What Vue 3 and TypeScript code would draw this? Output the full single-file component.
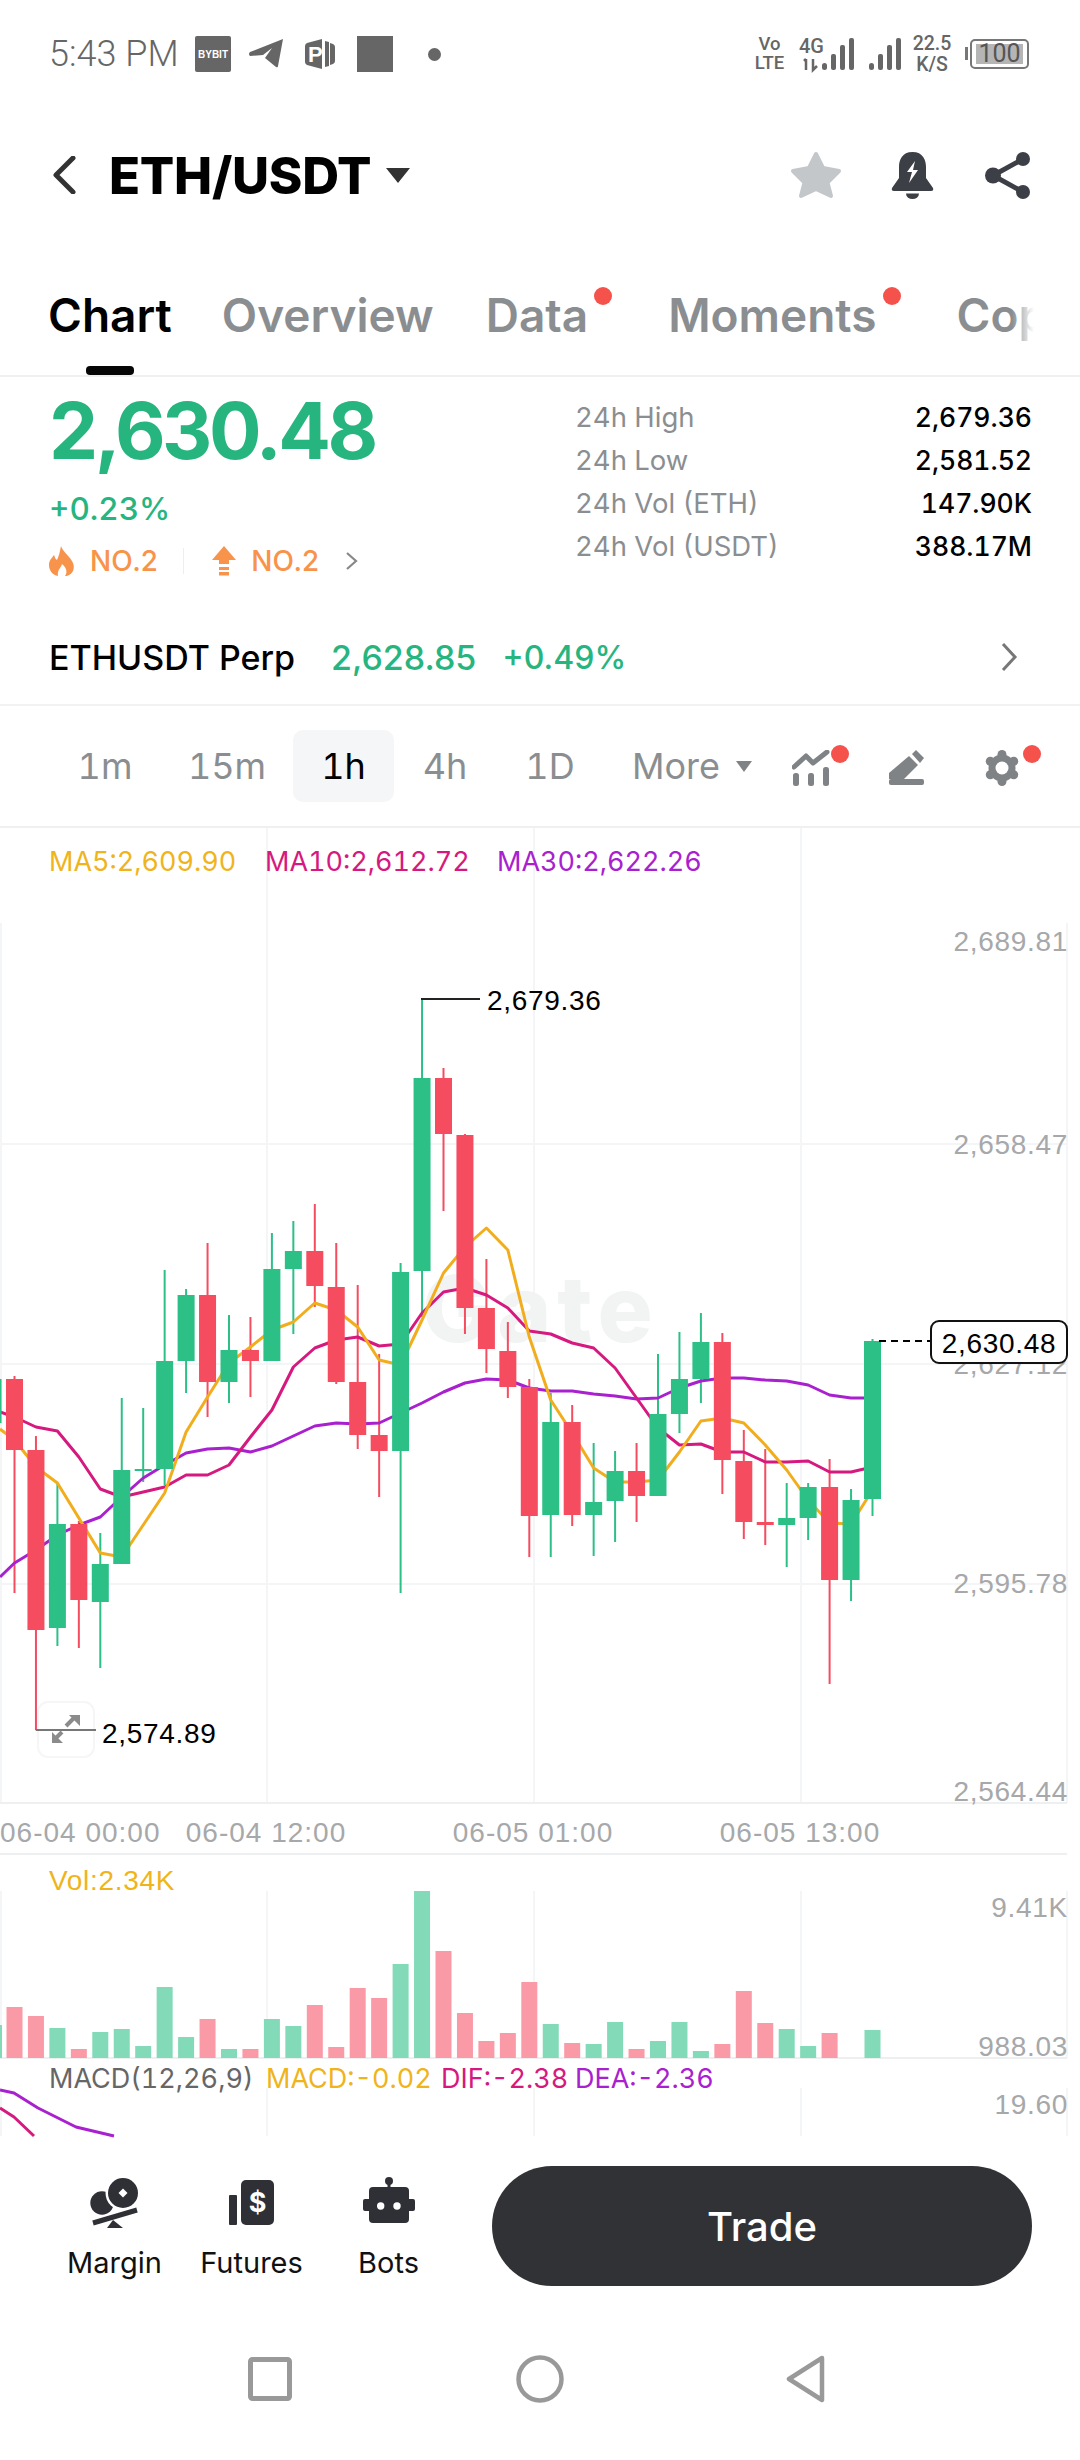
<template>
  <div class="page">
    <div class="status">
      <span class="time">5:43 PM</span>
      <span class="bybit">BYBIT</span>
      <svg class="st-plane" viewBox="0 0 36 32"><path d="M35 1 2 14q-2 2 0 4l13-1 9-7-7 10 11 9q2 1 2-1z" fill="#666"/></svg>
      <svg class="st-p" viewBox="0 0 30 30">
        <path d="M2 4 17 0v30L2 26q-2-1-2-3V7q0-2 2-3z" fill="#666"/>
        <path d="M20 2l4 1v24l-4 1zM25 4l3 1q2 1 2 3v14q0 2-2 3l-3 1z" fill="#666"/>
        <text x="3" y="23" class="st-p-text">P</text>
      </svg>
      <span class="st-square"></span>
      <span class="st-dot"></span>
      <div class="st-right">
        <span class="volte">Vo<br />LTE</span>
        <svg class="st-signal" viewBox="0 0 56 34">
          <text x="0" y="16" class="sig-text">4G</text>
          <path d="M7 22v11M5 24l2-2M14 22v11l4-4" stroke="#666" stroke-width="2.500" fill="none"/>
          <rect x="23" y="26" width="5" height="7" rx="2.500" fill="#666"/>
          <rect x="32" y="17" width="5" height="16" rx="2" fill="#666"/>
          <rect x="41" y="8" width="5" height="25" rx="2" fill="#666"/>
          <rect x="50" y="1" width="5" height="32" rx="2" fill="#666"/>
        </svg>
        <svg class="st-signal2" viewBox="0 0 33 34">
          <rect x="0" y="26" width="5" height="7" rx="2.500" fill="#666"/>
          <rect x="9" y="17" width="5" height="16" rx="2" fill="#666"/>
          <rect x="18" y="8" width="5" height="25" rx="2" fill="#666"/>
          <rect x="27" y="1" width="5" height="32" rx="2" fill="#666"/>
        </svg>
        <span class="speed">22.5<br />K/S</span>
        <div class="battery"><span>100</span></div>
      </div>
    </div>

    <div class="header">
      <svg class="back" viewBox="0 0 24 38"><path d="M21 2 4 19l17 17" fill="none" stroke="#333" stroke-width="5" stroke-linecap="round" stroke-linejoin="round"/></svg>
      <h1 class="title">ETH/USDT</h1>
      <span class="caret-big"></span>
      <div class="head-icons">
        <svg class="ic-star" viewBox="0 0 52 48"><path d="M26 3l7 14 16 3-11.500 11.500L41 45l-15-7-15 7 3.500-13.500L3 20l16-3z" fill="#c3c7ca" stroke="#c3c7ca" stroke-width="4" stroke-linejoin="round"/></svg>
        <svg class="ic-bell" viewBox="0 0 45 47">
          <path d="M22.500 0C12 0 9 8 9 15v11L2 36q-1 3 2 3h37q3 0 2-3l-7-10V15C36 8 33 0 22.500 0z" fill="#3c3f46"/>
          <path d="M16 41.500h13a6.500 5.500 0 0 1-13 0z" fill="#3c3f46"/>
          <path d="M25 9l-8 11h5l-3 11 9-13h-5z" fill="#fff"/>
        </svg>
        <svg class="ic-share" viewBox="0 0 46 47">
          <path d="M38 7 8 23.500 38 40" fill="none" stroke="#3c3f46" stroke-width="5"/>
          <circle cx="38" cy="7" r="7" fill="#3c3f46"/>
          <circle cx="8" cy="23.500" r="8" fill="#3c3f46"/>
          <circle cx="38" cy="40" r="7" fill="#3c3f46"/>
        </svg>
      </div>
    </div>

    <div class="tabs">
      <span class="tab active">Chart</span>
      <span class="tab">Overview</span>
      <span class="tab dotted">Data<i class="dot"></i></span>
      <span class="tab dotted">Moments<i class="dot"></i></span>
      <span class="tab">Copy</span>
      <span class="tabs-fade"></span>
    </div>

    <div class="stats">
      <div class="stats-left">
        <div class="price">2,630.48</div>
        <div class="change">+0.23%</div>
        <div class="rank">
          <svg class="ic-flame" viewBox="0 0 26 30"><path d="M12 0c2 6 9 10 12 17 3 8-3 13-8 13 3-4 1-9-3-12-1 4-5 6-4 12-5-1-9-5-9-11 0-5 3-7 5-10 1 2 1 4 3 5 2-4 3-9 4-14z" fill="#f7934a"/></svg>
          <span>NO.2</span>
          <i class="rank-sep"></i>
          <svg class="ic-up" viewBox="0 0 26 30"><path d="M13 0l12 14h-7v4H8v-4H1z" fill="#f7934a"/><path d="M8 21h10v3H8zM8 26h10v3.500H8z" fill="#f7934a"/></svg>
          <span>NO.2</span>
          <svg class="rank-more" viewBox="0 0 13 18"><path d="M2 1l9 8-9 8" fill="none" stroke="#888" stroke-width="2.200"/></svg>
        </div>
      </div>
      <div class="stats-right">
        <div v-for="row in stats" :key="row.label" class="stat-row">
          <span class="stat-label">{{ row.label }}</span>
          <span class="stat-value">{{ row.value }}</span>
        </div>
      </div>
    </div>

    <div class="perp">
      <span class="perp-name">ETHUSDT Perp</span>
      <span class="perp-price">2,628.85</span>
      <span class="perp-change">+0.49%</span>
      <svg class="perp-more" viewBox="0 0 18 30"><path d="M3 2l12 13L3 28" fill="none" stroke="#777" stroke-width="3"/></svg>
    </div>

    <div class="frames">
      <span class="frame f1m">1m</span>
      <span class="frame f15m">15m</span>
      <span class="frame f1h">1h</span>
      <span class="frame f4h">4h</span>
      <span class="frame f1d">1D</span>
      <span class="frame fmore">More</span>
      <span class="caret-small"></span>
      <div class="tools">
        <div class="tool tool-wide">
          <svg viewBox="0 0 38 36">
            <path d="M2 17 14 6l7 7L35 2" fill="none" stroke="#808386" stroke-width="5" stroke-linecap="round" stroke-linejoin="round"/>
            <rect x="1" y="23" width="6" height="13" rx="2.500" fill="#808386"/>
            <rect x="16" y="23" width="6" height="13" rx="2.500" fill="#808386"/>
            <rect x="31" y="17" width="6" height="19" rx="2.500" fill="#808386"/>
          </svg>
          <i class="dot tool-dot"></i>
        </div>
        <div class="tool">
          <svg viewBox="0 0 36 36">
            <path d="M0 23 20 6l9 9-14 14H0z" fill="#808386"/>
            <path d="M23 4l4-4 8 8-4 5z" fill="#808386"/>
            <rect x="0" y="29" width="35" height="6" rx="2" fill="#808386"/>
          </svg>
        </div>
        <div class="tool">
          <svg viewBox="0 0 36 36">
            <circle cx="18" cy="18" r="13.500" fill="#808386"/>
            <circle v-for="p in gearLobes" :key="p[0] + '-' + p[1]" :cx="p[0]" :cy="p[1]" r="4.500" fill="#808386"/>
            <circle cx="18" cy="18" r="6.500" fill="#fff"/>
          </svg>
          <i class="dot tool-dot gear-dot"></i>
        </div>
      </div>
    </div>

    <svg class="chart" viewBox="0 828 1080 1310">
      <g class="grid">
        <path v-for="x in gridX" :key="x" :d="`M${x} 923V1803M${x} 1891V2058M${x} 2088V2136`" />
        <path d="M0 1144H1067M0 1364H1067M0 1584H1067" />
        <path d="M0 1803H1067M0 1854H1067M0 2058H1067" class="grid-strong" />
        <path d="M267 828V923M534 828V923M801 828V923" />
      </g>

      <text x="49" y="871" class="legend" fill="#efb41c">MA5:2,609.90</text>
      <text x="265" y="871" class="legend" fill="#d6197e">MA10:2,612.72</text>
      <text x="497" y="871" class="legend" fill="#a921cf">MA30:2,622.26</text>

      <g class="watermark">
        <text x="422" y="1342">Gate</text>
      </g>

      <rect x="38" y="1702" width="56" height="55" rx="10" fill="#fff" stroke="#f6f6f6" stroke-width="2" />

      <g v-for="c in candles" :key="c.x">
        <path :d="`M${c.x} ${c.h}V${c.l}`" :stroke="c.color" stroke-width="2" />
      </g>

      <polyline :points="ma30" class="ma" stroke="#a921cf" />
      <polyline :points="ma10" class="ma" stroke="#d6197e" />
      <polyline :points="ma5" class="ma" stroke="#f2ad1d" />

      <!-- bodies sit over the moving averages in the reference -->
      <rect v-for="c in candles" :key="'b' + c.x" :x="c.x - 8.500" :y="c.t" width="17" :height="c.b - c.t" :fill="c.color" />

      <path d="M421 999H480" stroke="#222" stroke-width="2" />
      <text x="487" y="1010" class="tick dark">2,679.36</text>

      <path d="M35.800 1730H96" stroke="#777" stroke-width="2" />
      <path d="M66 1726l8-8M62 1732l-6 6" stroke="#8b8b8b" stroke-width="4" />
      <path d="M69 1715h11v11zM63 1743H52v-11z" fill="#8b8b8b" />
      <text x="102" y="1743" class="tick dark">2,574.89</text>

      <text x="1068" y="951" class="tick axis">2,689.81</text>
      <text x="1068" y="1154" class="tick axis">2,658.47</text>
      <text x="1068" y="1374" class="tick axis">2,627.12</text>
      <text x="1068" y="1593" class="tick axis">2,595.78</text>
      <text x="1068" y="1801" class="tick axis">2,564.44</text>

      <path d="M879 1341H930" stroke="#000" stroke-width="2" stroke-dasharray="7 5" />
      <rect x="931" y="1321" width="136" height="42" rx="8" fill="#fff" stroke="#111" stroke-width="2" />
      <text x="999" y="1353" class="tick dark mid">2,630.48</text>

      <text x="0" y="1842" class="tick date wide">06-04 00:00</text>
      <text x="266" y="1842" class="tick date wide mid">06-04 12:00</text>
      <text x="533" y="1842" class="tick date wide mid">06-05 01:00</text>
      <text x="800" y="1842" class="tick date wide mid">06-05 13:00</text>

      <text x="49" y="1890" class="tick" fill="#efb41c">Vol:2.34K</text>
      <rect x="-6" y="2025" width="8" height="33" :fill="VOL_GREEN" />
      <rect v-for="v in volumes" :key="'v' + v.x" :x="v.x - 8" :y="v.y" width="16" :height="2058 - v.y" :fill="v.color" />
      <text x="1068" y="1917" class="tick axis">9.41K</text>
      <text x="1068" y="2056" class="tick axis">988.03</text>

      <text x="49" y="2088" class="legend" fill="#666">MACD(12,26,9)</text>
      <text x="266" y="2088" class="legend" fill="#efb41c">MACD:-0.02</text>
      <text x="441" y="2088" class="legend" fill="#d6197e">DIF:-2.38</text>
      <text x="575" y="2088" class="legend" fill="#a921cf">DEA:-2.36</text>
      <text x="1068" y="2114" class="tick axis">19.60</text>
      <polyline points="0,2090 14,2093 38,2108 76,2127 114,2136" class="ma" stroke="#a921cf" />
      <polyline points="0,2108 14,2117 34,2136" class="ma" stroke="#d6197e" />
    </svg>

    <div class="actions">
      <div class="action">
        <div class="icon-box">
          <svg class="ic-margin" viewBox="0 0 50 54">
            <circle cx="12" cy="27" r="11.700" fill="#2e3036" />
            <circle cx="33" cy="17" r="17.500" fill="#fff" />
            <circle cx="33" cy="17" r="15" fill="#2e3036" />
            <path d="M33 12.500l4.500 4.500-4.500 4.500-4.500-4.500z" fill="#fff" />
            <path d="M3 47 47 34" stroke="#fff" stroke-width="9" />
            <path d="M3 47 47 34" stroke="#2e3036" stroke-width="5" />
            <path d="M23 44l10 8H17z" fill="#2e3036" />
          </svg>
        </div>
        <span>Margin</span>
      </div>
      <div class="action">
        <div class="icon-box">
          <svg class="ic-futures" viewBox="0 0 46 46">
            <rect x="0" y="15" width="8" height="30" rx="1" fill="#2e3036" />
            <rect x="12" y="0" width="33" height="45" rx="5" fill="#2e3036" />
            <text x="28.500" y="32" class="dollar">$</text>
          </svg>
        </div>
        <span>Futures</span>
      </div>
      <div class="action">
        <div class="icon-box">
          <svg class="ic-bots" viewBox="0 0 52 46">
            <circle cx="26" cy="4" r="4" fill="#2e3036" />
            <rect x="24.500" y="6" width="3" height="5" fill="#2e3036" />
            <rect x="6" y="10" width="40" height="36" rx="4" fill="#2e3036" />
            <rect x="0" y="22" width="52" height="12" rx="2" fill="#2e3036" />
            <circle cx="17.700" cy="29" r="3.700" fill="#fff" />
            <circle cx="34" cy="29" r="3.700" fill="#fff" />
          </svg>
        </div>
        <span>Bots</span>
      </div>
      <button class="trade">Trade</button>
    </div>

    <div class="nav">
      <svg class="nav-square" viewBox="0 0 44 44"><rect x="2.500" y="2.500" width="39" height="39" rx="2" fill="none" stroke="#999" stroke-width="5" /></svg>
      <svg class="nav-circle" viewBox="0 0 48 48"><circle cx="24" cy="24" r="21.500" fill="none" stroke="#999" stroke-width="4.500" /></svg>
      <svg class="nav-back" viewBox="0 0 40 48"><path d="M36 3 3 24l33 21z" fill="none" stroke="#999" stroke-width="4.500" stroke-linejoin="round" /></svg>
    </div>
  </div>
</template>

<script setup lang="ts">
const GREEN = '#2cc087'
const RED = '#f54c60'
const VOL_GREEN = '#82dab8'
const VOL_RED = '#fb9aa7'

const stats = [
  { label: '24h High', value: '2,679.36' },
  { label: '24h Low', value: '2,581.52' },
  { label: '24h Vol (ETH)', value: '147.90K' },
  { label: '24h Vol (USDT)', value: '388.17M' },
]

const gridX = [1, 267, 534, 801, 1067]

const gearLobes = [
  [18, 4.5],
  [29.7, 11.25],
  [29.7, 24.75],
  [18, 31.5],
  [6.3, 24.75],
  [6.3, 11.25],
]

const candleX = (i: number) => 14.5 + i * 21.45

// high, body top, body bottom, low, g/r — read off the picture in page pixels
const rawCandles: [number, number, number, number, string][] = [
  [1376, 1379, 1423, 1423, 'g'],
  [1376, 1379, 1450, 1593, 'r'],
  [1436, 1450, 1630, 1730, 'r'],
  [1483, 1524, 1628, 1646, 'g'],
  [1521, 1524, 1600, 1648, 'r'],
  [1533, 1564, 1602, 1668, 'g'],
  [1398, 1470, 1564, 1564, 'g'],
  [1408, 1469, 1471, 1482, 'g'],
  [1270, 1361, 1469, 1485, 'g'],
  [1289, 1295, 1361, 1393, 'g'],
  [1243, 1295, 1382, 1417, 'r'],
  [1315, 1350, 1382, 1403, 'g'],
  [1317, 1350, 1361, 1397, 'r'],
  [1233, 1269, 1361, 1361, 'g'],
  [1221, 1251, 1269, 1334, 'g'],
  [1204, 1251, 1286, 1307, 'r'],
  [1243, 1287, 1382, 1384, 'r'],
  [1285, 1382, 1435, 1449, 'r'],
  [1354, 1435, 1451, 1497, 'r'],
  [1263, 1272, 1451, 1593, 'g'],
  [998, 1078, 1271, 1317, 'g'],
  [1068, 1078, 1134, 1211, 'r'],
  [1134, 1135, 1308, 1334, 'r'],
  [1259, 1308, 1349, 1373, 'r'],
  [1322, 1351, 1387, 1398, 'r'],
  [1379, 1387, 1516, 1557, 'r'],
  [1393, 1422, 1515, 1557, 'g'],
  [1405, 1422, 1515, 1526, 'r'],
  [1443, 1502, 1515, 1556, 'g'],
  [1451, 1471, 1501, 1542, 'g'],
  [1443, 1471, 1496, 1522, 'r'],
  [1354, 1414, 1496, 1496, 'g'],
  [1332, 1379, 1414, 1433, 'g'],
  [1313, 1342, 1379, 1403, 'g'],
  [1333, 1342, 1460, 1494, 'r'],
  [1430, 1461, 1522, 1539, 'r'],
  [1449, 1522, 1525, 1545, 'r'],
  [1483, 1518, 1525, 1567, 'g'],
  [1483, 1487, 1518, 1540, 'g'],
  [1459, 1487, 1580, 1684, 'r'],
  [1489, 1500, 1580, 1601, 'g'],
  [1339, 1341, 1499, 1516, 'g'],
]

const candles = rawCandles.map(([h, t, b, l, side], i) => ({
  x: candleX(i - 1),
  h,
  t,
  b,
  l,
  color: side === 'g' ? GREEN : RED,
}))

// one value per candle, starting at candle 0; x=0 gets its own start value
const toPoints = (start: number, ys: number[]) =>
  [`0,${start}`, ...ys.map((y, i) => `${candleX(i)},${y}`)].join(' ')

const ma5 = toPoints(1429, [
  1440, 1467, 1483, 1518, 1553, 1557, 1525, 1493, 1432, 1397, 1363, 1347, 1330, 1322, 1303, 1310,
  1327, 1360, 1365, 1320, 1273, 1247, 1228, 1250, 1337, 1400, 1433, 1468, 1482, 1482, 1480, 1452,
  1421, 1418, 1423, 1445, 1470, 1500, 1523, 1524, 1490,
])
const ma10 = toPoints(1412, [
  1417, 1427, 1431, 1457, 1489, 1497, 1492, 1487, 1475, 1475, 1465, 1437, 1410, 1367, 1348, 1340,
  1337, 1346, 1344, 1313, 1292, 1288, 1295, 1308, 1331, 1334, 1343, 1348, 1368, 1398, 1428, 1445,
  1444, 1452, 1452, 1462, 1462, 1461, 1472, 1472, 1467,
])
const ma30 = toPoints(1577, [
  1563, 1550, 1535, 1525, 1517, 1497, 1478, 1465, 1453, 1449, 1448, 1452, 1446, 1436, 1426, 1423,
  1424, 1423, 1413, 1403, 1392, 1383, 1379, 1380, 1388, 1391, 1391, 1394, 1396, 1399, 1398, 1388,
  1381, 1378, 1378, 1380, 1381, 1385, 1395, 1398, 1398,
])

// bar top in page pixels, null where the reference has no bar
const rawVolumes: [number | null, string][] = [
  [2007, 'r'], [2016, 'r'], [2028, 'g'], [2049, 'r'], [2032, 'g'], [2029, 'g'], [2046, 'g'], [1987, 'g'],
  [2037, 'g'], [2019, 'r'], [2049, 'g'], [2049, 'r'], [2019, 'g'], [2026, 'g'], [2005, 'r'], [2047, 'r'],
  [1988, 'r'], [1998, 'r'], [1964, 'g'], [1891, 'g'], [1951, 'r'], [2013, 'r'], [2041, 'r'], [2033, 'r'],
  [1982, 'r'], [2024, 'g'], [2043, 'r'], [2044, 'g'], [2022, 'g'], [2049, 'r'], [2041, 'g'], [2022, 'g'],
  [2051, 'g'], [2044, 'r'], [1991, 'r'], [2023, 'r'], [2029, 'g'], [2046, 'g'], [2033, 'r'], [null, 'g'],
  [2030, 'g'],
]

const volumes = rawVolumes.flatMap(([y, side], i) =>
  y === null ? [] : [{ x: candleX(i), y, color: side === 'g' ? VOL_GREEN : VOL_RED }],
)
</script>

<style>
body {
  margin: 0;
  background: #fff;
}
</style>

<style scoped>
.page {
  width: 1080px;
  height: 2460px;
  overflow: hidden;
  background: #fff;
  font-family: Inter, "Liberation Sans", sans-serif;
  font-feature-settings: "tnum";
  color: #000;
  display: flex;
  flex-direction: column;
}

/* status bar */
.status {
  height: 108px;
  flex: none;
  display: flex;
  align-items: center;
  padding: 0 51px 0 49px;
  box-sizing: border-box;
  color: #666;
}
.time {
  font: 300 36px Roboto, sans-serif;
  width: 146px;
  flex: none;
}
.bybit {
  width: 36px;
  height: 36px;
  background: #666;
  border-radius: 2px;
  color: #fff;
  font: 700 10px "Liberation Sans", sans-serif;
  display: flex;
  align-items: center;
  justify-content: center;
}
.st-plane {
  width: 36px;
  height: 32px;
  margin-left: 17px;
}
.st-p {
  width: 30px;
  height: 30px;
  margin-left: 21px;
}
.st-p-text {
  font: 700 22px "Liberation Sans", sans-serif;
  fill: #fff;
}
.st-square {
  width: 36px;
  height: 36px;
  background: #666;
  margin-left: 22px;
}
.st-dot {
  width: 13px;
  height: 13px;
  border-radius: 50%;
  background: #666;
  margin-left: 35px;
}
.st-right {
  margin-left: auto;
  display: flex;
  align-items: center;
}
.volte {
  font: 500 18.500px/19px Roboto, sans-serif;
  text-align: center;
  width: 31px;
}
.st-signal {
  width: 56px;
  height: 34px;
  margin-left: 14px;
  overflow: visible;
}
.sig-text {
  font: 500 20px Roboto, sans-serif;
  fill: #666;
}
.st-signal2 {
  width: 33px;
  height: 34px;
  margin-left: 14px;
}
.speed {
  font: 500 19.500px/21px Roboto, sans-serif;
  text-align: center;
  width: 40px;
  margin-left: 10px;
}
.battery {
  position: relative;
  width: 59px;
  height: 30px;
  margin-left: 18px;
  border: 2px solid #777;
  border-radius: 5px;
  box-sizing: border-box;
  padding: 3px 4px;
  display: flex;
}
.battery::before {
  content: "";
  position: absolute;
  left: -7px;
  top: 6px;
  width: 3px;
  height: 13px;
  background: #777;
}
.battery span {
  flex: 1;
  background: #b5b5b5;
  font: 400 25px/20px Roboto, sans-serif;
  text-align: center;
  color: #555;
}

/* header */
.header {
  height: 134px;
  flex: none;
  display: flex;
  align-items: center;
  padding: 0 49px 0 52px;
}
.back {
  width: 24px;
  height: 38px;
}
.title {
  margin: 0 0 0 33px;
  font-size: 51px;
  font-weight: 800;
  letter-spacing: -0.300px;
}
.caret-big {
  margin-left: 15px;
  border-left: 12px solid transparent;
  border-right: 12px solid transparent;
  border-top: 15px solid #333;
}
.head-icons {
  margin-left: auto;
  display: flex;
  align-items: center;
}
.ic-star {
  width: 52px;
  height: 48px;
}
.ic-bell {
  width: 45px;
  height: 47px;
  margin-left: 48px;
}
.ic-share {
  width: 46px;
  height: 47px;
  margin-left: 50px;
}

/* tabs */
.tabs {
  height: 135px;
  flex: none;
  box-sizing: border-box;
  border-bottom: 2px solid #f0f0f0;
  padding-left: 48px;
  padding-top: 13px;
  display: flex;
  align-items: center;
  gap: 52px;
  overflow: hidden;
  position: relative;
  white-space: nowrap;
}
.tab {
  font-size: 46px;
  font-weight: 600;
  color: #8b8e91;
  position: relative;
}
.tab.active {
  color: #000;
  margin-right: -2px;
}
.tab.active::after {
  content: "";
  position: absolute;
  left: 38px;
  width: 48px;
  height: 9px;
  bottom: -32px;
  background: #060606;
  border-radius: 4px;
}
.tab.dotted {
  margin-right: 28px;
}
.dot {
  position: absolute;
  width: 18px;
  height: 18px;
  border-radius: 50%;
  background: #f4524a;
}
.tab .dot {
  right: -24px;
  top: 0;
}
.tabs-fade {
  position: absolute;
  left: 1012px;
  top: 0;
  bottom: 0;
  width: 68px;
  background: linear-gradient(90deg, rgba(255, 255, 255, 0) 0, #fff 22px);
}

/* price block */
.stats {
  height: 203px;
  flex: none;
  display: flex;
  padding: 0 48px 0 49px;
  box-sizing: border-box;
}
.stats-left {
  width: 526px;
}
.price {
  font-size: 78px;
  line-height: 84px;
  font-weight: 700;
  color: #27b57f;
  margin-top: 12px;
  letter-spacing: -3.500px;
  font-feature-settings: normal;
}
.change {
  font-size: 31.500px;
  line-height: 36px;
  color: #27b57f;
  font-weight: 500;
  margin-top: 18px;
}
.rank {
  display: flex;
  align-items: center;
  margin-top: 17px;
  color: #f7934a;
  font-size: 28px;
  font-weight: 500;
}
.ic-flame {
  width: 26px;
  height: 30px;
  margin-right: 15px;
}
.ic-up {
  width: 26px;
  height: 30px;
  margin-right: 14px;
}
.rank-sep {
  width: 1px;
  height: 26px;
  background: #eee;
  margin: 0 27px 0 25px;
}
.rank-more {
  width: 13px;
  height: 18px;
  margin-left: 25px;
}
.stats-right {
  flex: 1;
  padding-top: 19px;
}
.stat-row {
  display: flex;
  justify-content: space-between;
  height: 43px;
  line-height: 43px;
  font-size: 27.500px;
}
.stat-label {
  color: #8b8e91;
}
.stat-value {
  color: #000;
  font-weight: 500;
  font-size: 26.500px;
}

/* perp row */
.perp {
  height: 126px;
  flex: none;
  box-sizing: border-box;
  border-bottom: 2px solid #f2f2f2;
  display: flex;
  align-items: center;
  padding: 30px 62px 0 49px;
  font-size: 34px;
  font-weight: 500;
  font-feature-settings: normal;
}
.perp-price {
  margin-left: 36px;
  color: #27b57f;
}
.perp-change {
  margin-left: 26px;
  color: #27b57f;
  font-size: 32px;
}
.perp-more {
  margin-left: auto;
  width: 18px;
  height: 30px;
}

/* timeframe row */
.frames {
  height: 122px;
  flex: none;
  box-sizing: border-box;
  border-bottom: 2px solid #f0f0f0;
  display: flex;
  align-items: center;
  font-size: 36px;
  color: #8b8e91;
}
.frame {
  display: flex;
  align-items: center;
  justify-content: center;
  flex: none;
}
.f1m {
  margin-left: 65px;
  width: 80px;
}
.f15m {
  margin-left: 32px;
  width: 100px;
}
.f1h {
  margin-left: 16px;
  width: 101px;
  height: 72px;
  background: #f5f6f7;
  border-radius: 10px;
  color: #000;
}
.f4h {
  margin-left: 21px;
  width: 60px;
}
.f1d {
  margin-left: 45px;
  width: 60px;
}
.fmore {
  margin-left: 50px;
  width: 92px;
}
.caret-small {
  margin-left: 14px;
  border-left: 8px solid transparent;
  border-right: 8px solid transparent;
  border-top: 11px solid #808386;
}
.tools {
  margin-left: auto;
  margin-right: 60px;
  padding-top: 3px;
  display: flex;
  gap: 59px;
}
.tool {
  position: relative;
  width: 36px;
  height: 36px;
}
.tool.tool-wide {
  width: 38px;
}
.tool svg {
  display: block;
  width: 100%;
  height: 36px;
}
.tool-dot {
  right: -19px;
  top: -5px;
}
.tool-dot.gear-dot {
  right: -21px;
}

/* chart */
.chart {
  display: block;
  width: 1080px;
  height: 1310px;
  flex: none;
}
.grid path {
  stroke: #f4f5f6;
  stroke-width: 2;
  fill: none;
}
.grid path.grid-strong {
  stroke: #eeeff0;
}
.legend {
  font: 400 27px Inter, "Liberation Sans", sans-serif;
  font-feature-settings: "tnum";
}
.tick {
  font: 400 28px "Liberation Sans", Arial, sans-serif;
  letter-spacing: 0.700px;
}
.tick.wide {
  letter-spacing: 1px;
}
.tick.dark {
  fill: #000;
}
.tick.axis {
  fill: #a6a8aa;
  text-anchor: end;
}
.tick.date {
  fill: #a6a8aa;
}
.tick.mid {
  text-anchor: middle;
}
.watermark text {
  font: 800 92px Inter, sans-serif;
  letter-spacing: 6px;
  fill: #f2f4f4;
}
.ma {
  fill: none;
  stroke-width: 3;
  stroke-linejoin: round;
}

/* bottom actions */
.actions {
  height: 172px;
  flex: none;
  display: flex;
  align-items: center;
  padding: 4px 48px 0 0;
  box-sizing: border-box;
  position: relative;
}
.action {
  width: 137px;
  flex: none;
  align-self: flex-start;
  margin-top: 34px;
  display: flex;
  flex-direction: column;
  align-items: center;
  font-size: 29px;
  color: #111;
}
.action:first-child {
  margin-left: 46px;
}
.action span {
  line-height: 36px;
  margin-top: 15px;
}
.icon-box {
  height: 54px;
  display: flex;
  align-items: center;
}
.ic-margin {
  width: 50px;
  height: 54px;
}
.ic-futures {
  width: 46px;
  height: 46px;
}
.ic-bots {
  width: 52px;
  height: 46px;
  margin-bottom: 6px;
}
.dollar {
  font: 700 27px Inter, sans-serif;
  fill: #fff;
  text-anchor: middle;
}
.trade {
  margin-left: auto;
  width: 540px;
  height: 120px;
  border: 0;
  border-radius: 60px;
  background: #313236;
  color: #fff;
  font: 500 40px Inter, sans-serif;
}

/* android nav */
.nav {
  flex: 1;
  display: flex;
  align-items: center;
  padding-bottom: 12px;
  box-sizing: border-box;
}
.nav-square {
  width: 44px;
  height: 44px;
  margin-left: 248px;
}
.nav-circle {
  width: 48px;
  height: 48px;
  margin-left: 224px;
}
.nav-back {
  width: 40px;
  height: 48px;
  margin-left: 222px;
}
</style>
